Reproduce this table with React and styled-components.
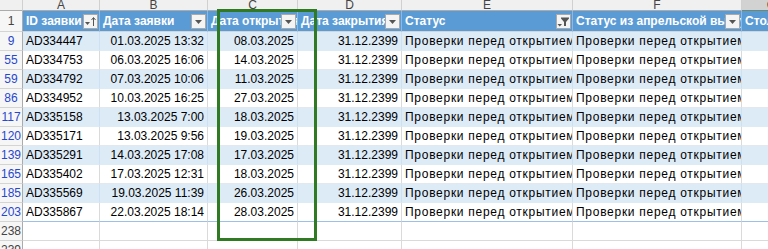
import React from 'react';
import styled, { createGlobalStyle } from 'styled-components';

const GlobalStyle = createGlobalStyle`
  body {
    margin: 0;
    background: #ffffff;
    overflow: hidden;
  }
`;

const COLS = '23px 77px 108px 90px 104px 171px 169px 60px';

const Sheet = styled.div`
  position: relative;
  width: 768px;
  height: 249px;
  overflow: hidden;
  font-family: 'Liberation Sans', Arial, sans-serif;
  font-size: 12px;
  color: #000;
`;

const Row = styled.div`
  display: grid;
  grid-template-columns: ${COLS};
  height: ${props => props.h}px;
`;

const ColLetter = styled.div`
  box-sizing: border-box;
  background: ${props => (props.active ? '#d2d2d2' : '#f0f0f0')};
  border-right: 1px solid #d0d0d0;
  border-bottom: 1px solid ${props => (props.active ? '#6f8a6a' : '#ababab')};
  color: #444;
  text-align: center;
  line-height: 10px;
  font-size: 12px;
  overflow: hidden;
`;

const RowNum = styled.div`
  box-sizing: border-box;
  background: #f6f6f6;
  border-right: 1px solid #ababab;
  border-bottom: 1px solid #d4d4d4;
  color: ${props => (props.filtered ? '#2747d0' : '#444')};
  text-align: center;
  line-height: ${props => props.h - 1}px;
  font-size: 12px;
  overflow: hidden;
`;

const HeadCell = styled.div`
  position: relative;
  box-sizing: border-box;
  background: #5b9bd5;
  border-right: 1px solid #8cb8e2;
  border-bottom: 1px solid #d4d4d4;
  color: #fff;
  font-weight: bold;
  padding: 0 3px;
  line-height: 20px;
  white-space: nowrap;
  overflow: hidden;
`;

const FilterButton = styled.div`
  position: absolute;
  right: 1px;
  top: 3px;
  width: 15px;
  height: 15px;
  box-sizing: border-box;
  background: #f4f4f4;
  border: 1px solid #a9a9a9;
  display: flex;
  align-items: center;
  justify-content: center;
`;

const Cell = styled.div`
  box-sizing: border-box;
  background: ${props => (props.striped ? '#ddebf7' : '#ffffff')};
  border-right: 1px solid ${props => (props.striped ? '#cfe0f1' : '#dadada')};
  border-bottom: 1px solid ${props => (props.last ? '#9bc2e6' : props.striped ? '#ddebf7' : '#e2e8f0')};
  text-align: ${props => props.align || 'left'};
  letter-spacing: ${props => (props.wide ? '0.72px' : 'normal')};
  padding: 0 3px;
  line-height: 18px;
  white-space: nowrap;
  overflow: hidden;
`;

const EmptyCell = styled.div`
  box-sizing: border-box;
  border-right: 1px solid #dadada;
  border-bottom: 1px solid #dadada;
`;

const Highlight = styled.div`
  position: absolute;
  left: 217px;
  top: 9px;
  width: 100px;
  height: 232px;
  box-sizing: border-box;
  border: 3px solid #2f7a22;
  pointer-events: none;
`;

const Arrow = () => (
  <svg width="9" height="6" viewBox="0 0 9 6">
    <path d="M1 1 L8 1 L4.5 5 Z" fill="#555" />
  </svg>
);

const SortIcon = () => (
  <svg width="13" height="13" viewBox="0 0 13 13">
    <path d="M1 7 L6 7 L3.5 10 Z" fill="#555" />
    <path d="M9.5 11 L9.5 3" stroke="#555" strokeWidth="1" />
    <path d="M7.5 5 L9.5 2.5 L11.5 5" stroke="#555" strokeWidth="1" fill="none" />
  </svg>
);

const FunnelIcon = () => (
  <svg width="13" height="13" viewBox="0 0 13 13">
    <path d="M4 2.5 L12 2.5 L12 3.5 L9 7 L9 11 L7 11 L7 7 L4 3.5 Z" fill="#555" />
    <path d="M0.5 9 L5 9 L2.75 11.5 Z" fill="#555" />
  </svg>
);

const headers = [
  { text: 'ID заявки', icon: 'sort' },
  { text: 'Дата заявки', icon: 'arrow' },
  { text: 'Дата открытия', icon: 'arrow' },
  { text: 'Дата закрытия', icon: 'arrow' },
  { text: 'Статус', icon: 'funnel' },
  { text: 'Статус из апрельской выгрузки', icon: 'arrow' },
  { text: 'Столбец1', icon: null },
];

const rows = [
  ['9', 'AD334447', '01.03.2025 13:32', '08.03.2025'],
  ['55', 'AD334753', '06.03.2025 16:06', '14.03.2025'],
  ['59', 'AD334792', '07.03.2025 10:06', '11.03.2025'],
  ['86', 'AD334952', '10.03.2025 16:25', '27.03.2025'],
  ['117', 'AD335158', '13.03.2025 7:00', '18.03.2025'],
  ['120', 'AD335171', '13.03.2025 9:56', '19.03.2025'],
  ['139', 'AD335291', '14.03.2025 17:08', '17.03.2025'],
  ['165', 'AD335402', '17.03.2025 12:31', '18.03.2025'],
  ['185', 'AD335569', '19.03.2025 11:39', '26.03.2025'],
  ['203', 'AD335867', '22.03.2025 18:14', '28.03.2025'],
];

const STATUS = 'Проверки перед открытием';

const renderIcon = icon => {
  if (icon === 'sort') return <SortIcon />;
  if (icon === 'funnel') return <FunnelIcon />;
  return <Arrow />;
};

export default function App() {
  return (
    <Sheet>
      <GlobalStyle />
      <Row h={11}>
        {['', 'A', 'B', 'C', 'D', 'E', 'F', 'G'].map(l => (
          <ColLetter key={l} active={l === 'G'}>{l}</ColLetter>
        ))}
      </Row>
      <Row h={21}>
        <RowNum h={21}>1</RowNum>
        {headers.map(h => (
          <HeadCell key={h.text}>
            {h.text}
            {h.icon && <FilterButton>{renderIcon(h.icon)}</FilterButton>}
          </HeadCell>
        ))}
      </Row>
      {rows.map(([num, id, created, opened], i) => {
        const striped = i % 2 === 0;
        const last = i === rows.length - 1;
        return (
          <Row h={19} key={num}>
            <RowNum h={19} filtered>{num}</RowNum>
            <Cell striped={striped} last={last}>{id}</Cell>
            <Cell striped={striped} last={last} align="right">{created}</Cell>
            <Cell striped={striped} last={last} align="right">{opened}</Cell>
            <Cell striped={striped} last={last} align="right">31.12.2399</Cell>
            <Cell striped={striped} last={last} wide>{STATUS}</Cell>
            <Cell striped={striped} last={last} wide>{STATUS}</Cell>
            <Cell striped={striped} last={last} />
          </Row>
        );
      })}
      {['238', '239'].map(num => (
        <Row h={19} key={num}>
          <RowNum h={19}>{num}</RowNum>
          {[1, 2, 3, 4, 5, 6, 7].map(c => (
            <EmptyCell key={c} />
          ))}
        </Row>
      ))}
      <Highlight />
    </Sheet>
  );
}
